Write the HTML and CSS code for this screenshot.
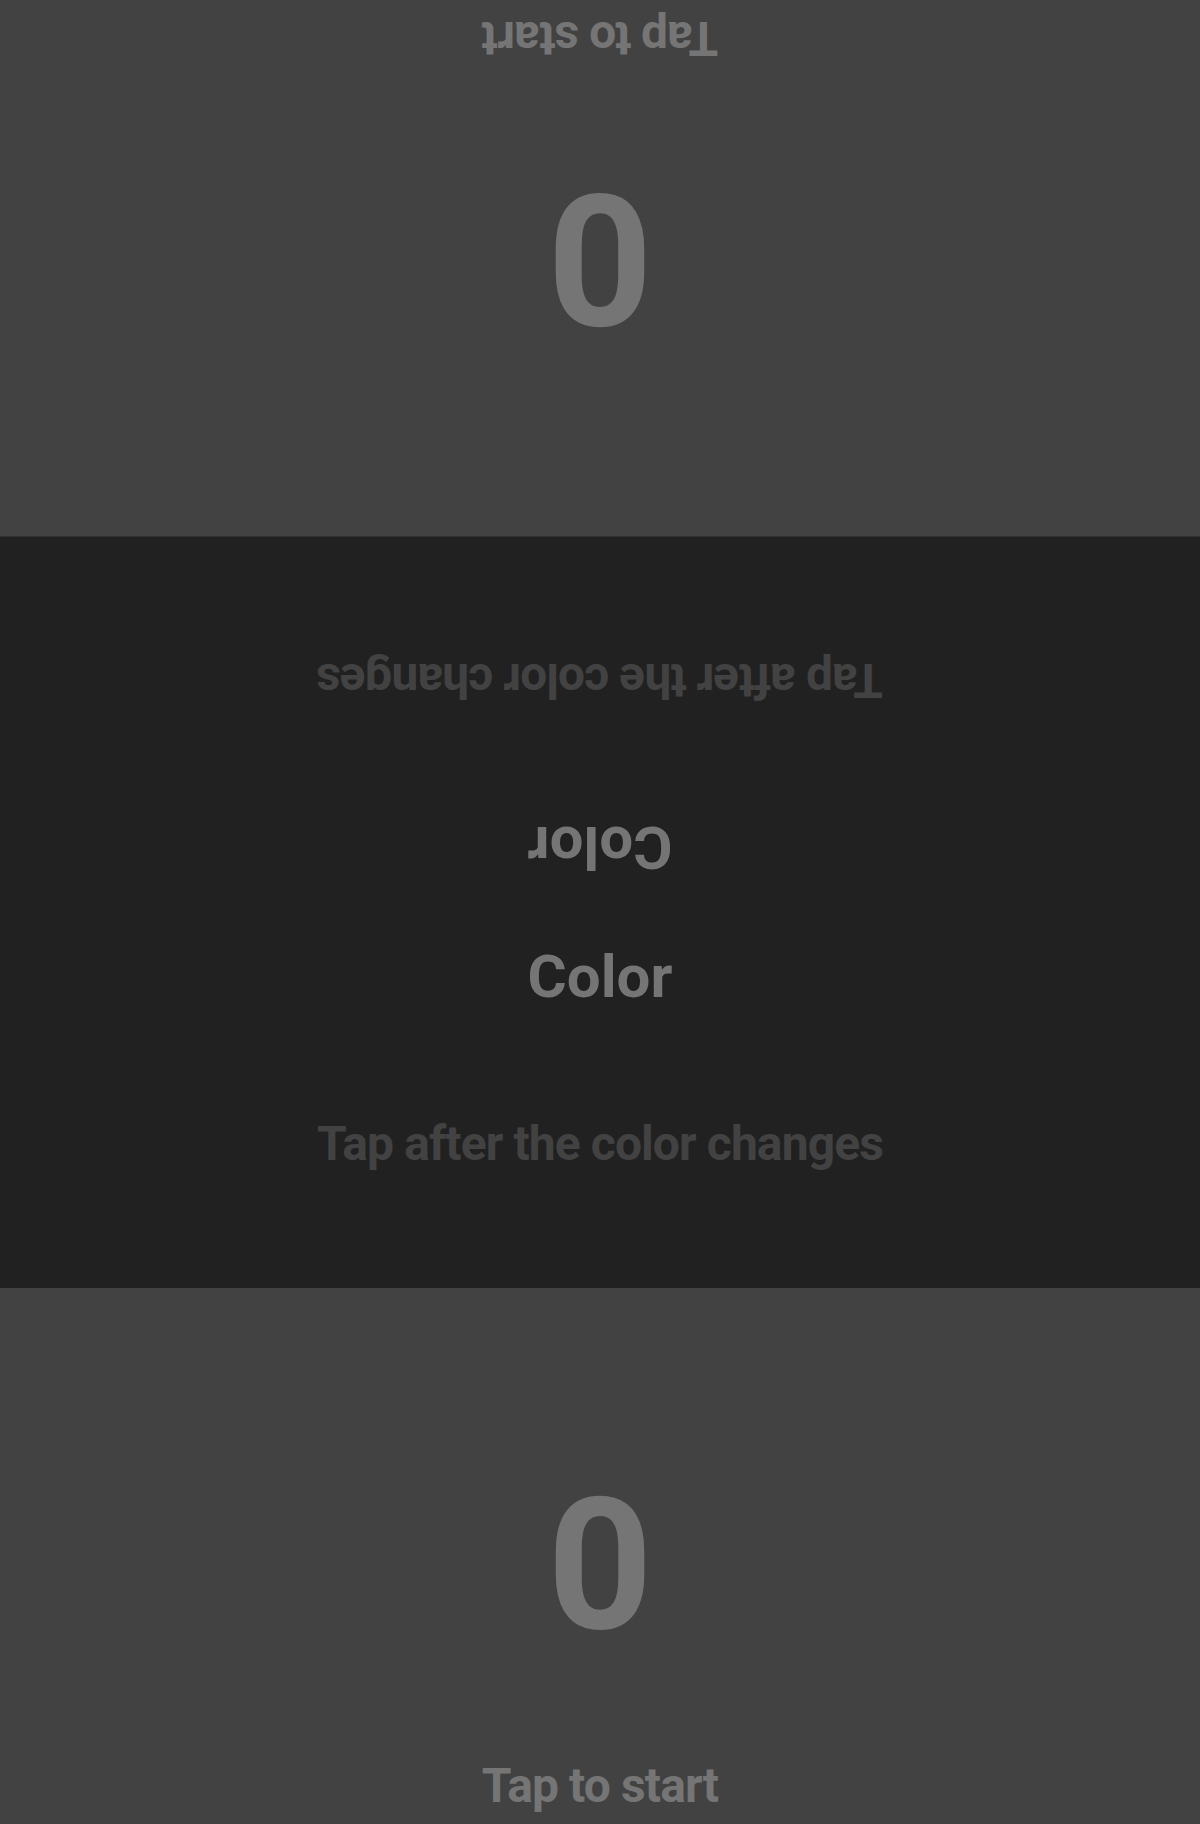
FILE: index.html
```html
<!DOCTYPE html>
<html lang="en">
<head>
<meta charset="utf-8">
<title>Reaction Game</title>
<link rel="stylesheet" href="styles.css">
</head>
<body>
<main class="game">
  <section class="player player-flipped">
    <div class="score">0</div>
    <div class="tap-label">Tap to start</div>
  </section>
  <section class="arena">
    <div class="arena-half arena-half-flipped">
      <div class="color-word">Color</div>
      <div class="instruction">Tap after the color changes</div>
    </div>
    <div class="arena-half">
      <div class="color-word">Color</div>
      <div class="instruction">Tap after the color changes</div>
    </div>
  </section>
  <section class="player">
    <div class="score">0</div>
    <div class="tap-label">Tap to start</div>
  </section>
</main>
</body>
</html>
```
FILE: styles.css
```css
* { box-sizing: border-box; }
html, body {
  margin: 0;
  padding: 0;
  height: 100%;
}
html, body {
  background: #424242;
}
body {
  font-family: Roboto, "Liberation Sans", Arial, sans-serif;
  font-weight: 700;
}
.game {
  display: flex;
  flex-direction: column;
  width: 1200px;
  height: 1824px;
}
.player {
  flex: 1 1 0;
  min-height: 0;
  background: #424242;
  display: grid;
  grid-template-rows: 29px 1fr auto 1fr 10px;
  justify-items: center;
}
.player-flipped {
  transform: rotate(180deg);
}
.score {
  grid-row: 3;
  font-size: 184px;
  color: #757575;
  line-height: normal;
}
.tap-label {
  grid-row: 4;
  align-self: end;
  font-size: 48px;
  letter-spacing: -0.9px;
  color: #757575;
  line-height: normal;
}
.arena {
  flex: 1.4 1 0;
  min-height: 0;
  background: #212121;
  display: flex;
  flex-direction: column;
}
.arena-half {
  flex: 1 1 0;
  min-height: 0;
  display: flex;
  flex-direction: column;
  align-items: center;
}
.arena-half-flipped {
  transform: rotate(180deg);
}
.color-word {
  font-size: 60px;
  color: #757575;
  line-height: normal;
  margin-top: 28.5px;
  margin-bottom: 103px;
}
.instruction {
  font-size: 48px;
  letter-spacing: -0.9px;
  color: #424242;
  line-height: normal;
}
```
